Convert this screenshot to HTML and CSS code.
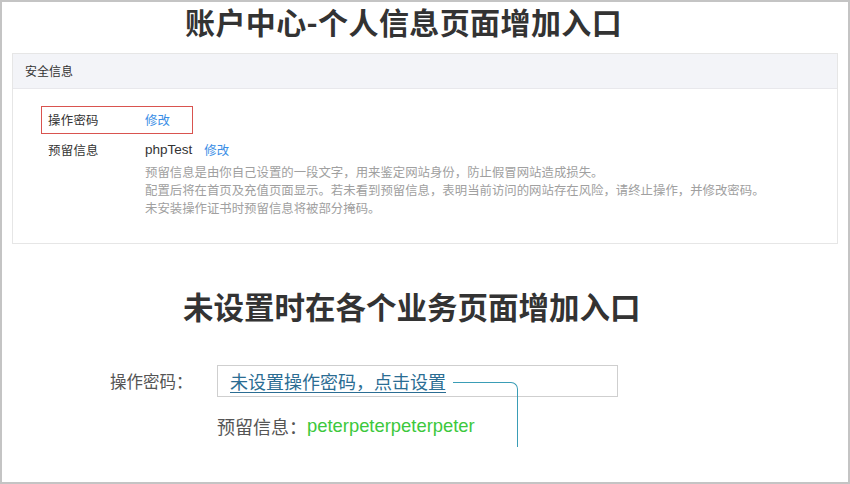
FILE: index.html
```html
<!DOCTYPE html>
<html lang="zh-CN">
<head>
<meta charset="utf-8">
<link rel="stylesheet" href="styles.css">
</head>
<body>
<div class="frame">
  <h1 class="title title-1">账户中心-个人信息页面增加入口</h1>
  <div class="panel">
    <div class="panel-head">安全信息</div>
    <div class="panel-body">
      <div class="row row-hl">
        <span class="label">操作密码</span>
        <a class="link">修改</a>
      </div>
      <div class="row row-info">
        <span class="label">预留信息</span>
        <div class="info">
          <div class="info-main"><span class="value">phpTest</span><a class="link">修改</a></div>
          <div class="desc">
            <p>预留信息是由你自己设置的一段文字，用来鉴定网站身份，防止假冒网站造成损失。</p>
            <p>配置后将在首页及充值页面显示。若未看到预留信息，表明当前访问的网站存在风险，请终止操作，并修改密码。</p>
            <p>未安装操作证书时预留信息将被部分掩码。</p>
          </div>
        </div>
      </div>
    </div>
  </div>
  <h1 class="title title-2">未设置时在各个业务页面增加入口</h1>
  <div class="form">
    <div class="form-row">
      <span class="form-label">操作密码：</span>
      <div class="input"><a class="setlink">未设置操作密码，点击设置</a></div>
    </div>
    <div class="form-row2">
      <span class="form-label2">预留信息：</span><span class="green">peterpeterpeterpeter</span>
    </div>
  </div>
  <div class="connector"></div>
</div>
</body>
</html>
```

FILE: styles.css
```css
html, body {
  margin: 0;
  padding: 0;
  background: #fff;
}
.frame {
  position: relative;
  width: 850px;
  height: 484px;
  box-sizing: border-box;
  border: 2px solid #c4c4c4;
  font-family: "Noto Sans CJK SC", "Liberation Sans", sans-serif;
  color: #333;
  overflow: hidden;
}
.title {
  margin: 0;
  font-size: 30px;
  font-weight: 700;
  color: #333;
  white-space: nowrap;
}
.title-1 {
  margin-left: 183px;
  line-height: 39px;
  letter-spacing: 0.4px;
}
.panel {
  margin: 12px 10px 0 10px;
  border: 1px solid #e6e6e6;
}
.panel-head {
  height: 34px;
  line-height: 34px;
  padding-left: 12px;
  background: #f3f4f8;
  border-bottom: 1px solid #e8e8ec;
  font-size: 12px;
  color: #333;
}
.panel-body {
  padding: 17px 0 26px 28px;
  font-size: 12.4px;
}
.row {
  display: flex;
  align-items: center;
}
.row-hl {
  width: 152px;
  height: 28px;
  box-sizing: border-box;
  border: 1px solid #d9534f;
  padding-left: 6px;
}
.label {
  width: 97px;
  flex: none;
  letter-spacing: 0.3px;
  color: #333;
  line-height: 20px;
}
.link {
  color: #3a8ee6;
  text-decoration: none;
}
.row-info {
  margin-top: 6px;
  padding-left: 7px;
  align-items: flex-start;
}
.info-main {
  line-height: 20px;
  display: flex;
  align-items: center;
  gap: 12px;
}
.value {
  font-family: "Liberation Sans", "Noto Sans CJK SC", sans-serif;
  font-size: 13.5px;
  color: #333;
}
.desc {
  margin-top: 3px;
  color: #a0a0a0;
}
.desc p {
  margin: 0;
  line-height: 18px;
  white-space: nowrap;
}
.title-2 {
  margin-top: 42px;
  margin-left: 181px;
  font-size: 30.5px;
  line-height: 40px;
}
.form {
  margin-top: 39px;
}
.form-row {
  display: flex;
  align-items: center;
  gap: 24px;
  padding-left: 108px;
  height: 32px;
}
.form-label {
  width: 83px;
  font-size: 16.5px;
  color: #555;
  white-space: nowrap;
}
.input {
  width: 401px;
  height: 32px;
  box-sizing: border-box;
  border: 1px solid #cfcfcf;
  padding-left: 12px;
  display: flex;
  align-items: center;
}
.setlink {
  color: #2b6d93;
  font-size: 18px;
  text-decoration: underline;
  text-underline-offset: 3px;
  line-height: 24px;
}
.form-row2 {
  margin-top: 17px;
  padding-left: 215px;
  line-height: 24px;
  display: flex;
  align-items: center;
}
.form-label2 {
  font-size: 18px;
  color: #555;
}
.green {
  font-family: "Liberation Sans", sans-serif;
  font-size: 18.4px;
  color: #3cc83c;
}
.connector {
  position: absolute;
  left: 451px;
  top: 380px;
  width: 64px;
  height: 64px;
  border-top: 1.5px solid #3a9db6;
  border-right: 1.5px solid #3a9db6;
  border-top-right-radius: 7px;
}
```
